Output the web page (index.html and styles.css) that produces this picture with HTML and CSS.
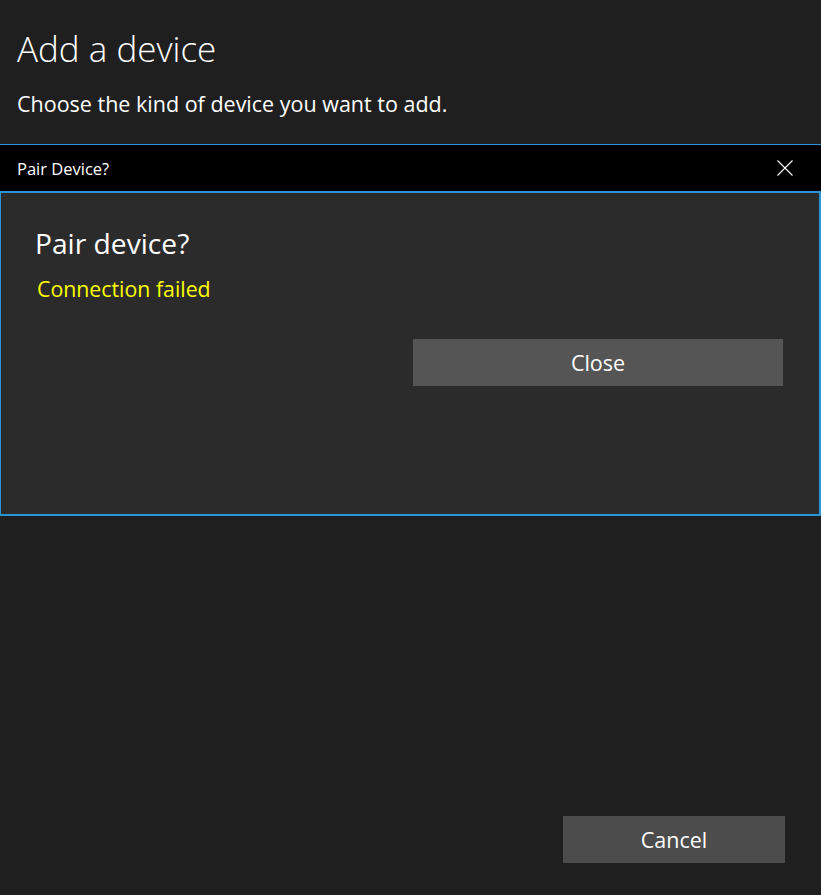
FILE: index.html
```html
<!DOCTYPE html>
<html>
<head>
<meta charset="utf-8">
<link rel="stylesheet" href="styles.css">
</head>
<body>
<div class="page">
  <header class="intro">
    <h1 class="title">Add a device</h1>
    <p class="subtitle">Choose the kind of device you want to add.</p>
  </header>
  <section class="dialog">
    <div class="dialog-bar">
      <span class="bar-title">Pair Device?</span>
      <svg class="close-x" width="16" height="16" viewBox="0 0 16 16"><path d="M0.5 0.5 L15.5 15.5 M15.5 0.5 L0.5 15.5" stroke="#fff" stroke-width="1.1" fill="none"/></svg>
    </div>
    <div class="dialog-body">
      <h2 class="dialog-heading">Pair device?</h2>
      <p class="status">Connection failed</p>
      <div class="dialog-actions">
        <button class="btn btn-close">Close</button>
      </div>
    </div>
  </section>
  <footer class="footer">
    <button class="btn btn-cancel">Cancel</button>
  </footer>
</div>
</body>
</html>
```
FILE: styles.css
```css
html, body {
  margin: 0;
  padding: 0;
  background: #1f1f1f;
}
body {
  font-family: "Open Sans", "Noto Sans", sans-serif;
  color: #ffffff;
}
.page {
  height: 895px;
  display: flex;
  flex-direction: column;
}
.intro {
  padding: 25px 17px 25px;
}
.title {
  margin: 0;
  font-size: 35px;
  font-weight: 300;
  line-height: 48px;
}
.subtitle {
  margin: 16px 0 0;
  font-size: 21.5px;
  font-weight: 400;
  line-height: 30px;
}
.dialog {
  display: flex;
  flex-direction: column;
}
.dialog-bar {
  border-top: 1px solid #2896d6;
  background: #000;
  height: 46px;
  display: flex;
  align-items: center;
  justify-content: space-between;
  padding: 0 28px 0 17px;
}
.bar-title {
  font-size: 16.5px;
}
.close-x {
  display: block;
}
.dialog-body {
  background: #2b2b2b;
  border: 2px solid #2896d6;
  border-left-width: 1px;
  height: 325px;
  box-sizing: border-box;
  padding: 30px 36px 0 34px;
}
.dialog-heading {
  margin: 0;
  font-size: 28.2px;
  font-weight: 400;
  line-height: 40px;
}
.status {
  margin: 11px 0 0 2px;
  color: #ffff00;
  font-size: 21.3px;
  line-height: 30px;
}
.dialog-actions {
  display: flex;
  justify-content: flex-end;
  margin-top: 35px;
}
.btn {
  border: none;
  color: #fff;
  font-family: inherit;
  font-size: 21.5px;
  height: 47px;
  padding: 0;
}
.btn-close {
  width: 370px;
  background: #555555;
}
.footer {
  margin-top: auto;
  display: flex;
  justify-content: flex-end;
  padding: 0 36px 32px 0;
}
.btn-cancel {
  width: 222px;
  background: #4c4c4c;
}
```
